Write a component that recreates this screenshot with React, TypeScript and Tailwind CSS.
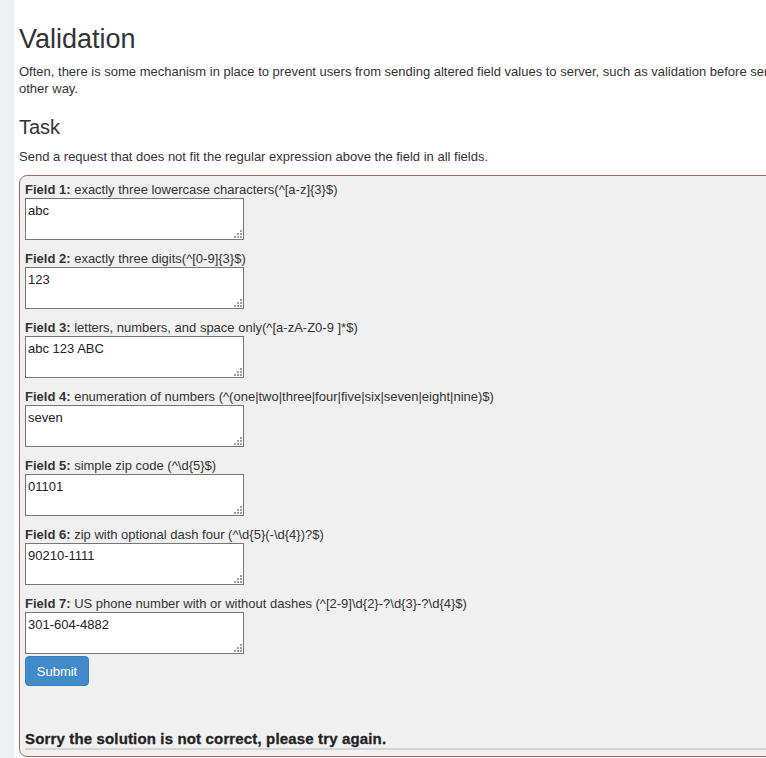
import React from "react";

const fields = [
  { n: 1, desc: "exactly three lowercase characters(^[a-z]{3}$)", value: "abc" },
  { n: 2, desc: "exactly three digits(^[0-9]{3}$)", value: "123" },
  { n: 3, desc: "letters, numbers, and space only(^[a-zA-Z0-9 ]*$)", value: "abc 123 ABC" },
  { n: 4, desc: "enumeration of numbers (^(one|two|three|four|five|six|seven|eight|nine)$)", value: "seven" },
  { n: 5, desc: "simple zip code (^\\d{5}$)", value: "01101" },
  { n: 6, desc: "zip with optional dash four (^\\d{5}(-\\d{4})?$)", value: "90210-1111" },
  { n: 7, desc: "US phone number with or without dashes (^[2-9]\\d{2}-?\\d{3}-?\\d{4}$)", value: "301-604-4882" },
];

function Grip() {
  // windows-style dotted resize handle
  return (
    <svg className="pointer-events-none absolute right-[2px] bottom-[2px]" width="8" height="8" viewBox="0 0 8 8">
      <g fill="#a0a0a0">
        <rect x="6" y="0" width="2" height="2" />
        <rect x="3" y="3" width="2" height="2" />
        <rect x="6" y="3" width="2" height="2" />
        <rect x="0" y="6" width="2" height="2" />
        <rect x="3" y="6" width="2" height="2" />
        <rect x="6" y="6" width="2" height="2" />
      </g>
    </svg>
  );
}

export default function App() {
  return (
    <div className="flex h-[758px] w-[766px] overflow-hidden bg-white text-[#333] font-['Liberation_Sans',Arial,sans-serif] text-[13px] leading-[17px]">
      <div className="w-[14px] shrink-0 bg-[#eef0f4]" />
      <div className="ml-[5px] w-[900px] shrink-0">
        <h1 className="mt-[22px] text-[27px] leading-[34px]">Validation</h1>
        <div className="mt-[7px]">
          <p className="whitespace-nowrap">
            Often, there is some mechanism in place to prevent users from sending altered field values to server, such as validation before sending.
          </p>
          <p>other way.</p>
        </div>
        <h2 className="mt-[16px] text-[20px] leading-[28px]">Task</h2>
        <p className="mt-[7px]">Send a request that does not fit the regular expression above the field in all fields.</p>
        <form
          className="mt-[10px] rounded-[8px] border border-[#a86868] bg-[#f0f0f0] px-[5px] pt-[5px] pb-[6px]"
          onSubmit={(e) => e.preventDefault()}
        >
          <div>
            {fields.map((f) => (
              <div key={f.n} className="mb-[10px] last:mb-0">
                <div>
                  <b>Field {f.n}:</b> {f.desc}
                </div>
                <div className="relative w-[219px]">
                  <textarea
                    defaultValue={f.value}
                    className="block h-[42px] w-[219px] resize-none border border-[#767676] bg-white px-[2px] pt-[3px] pb-[1px] text-[13px] leading-[17px] text-[#222] outline-none"
                  />
                  <Grip />
                </div>
              </div>
            ))}
          </div>
          <button
            type="submit"
            className="mt-[2px] block h-[30px] w-[64px] rounded-[4px] border border-[#3a7fbd] bg-[#428bca] text-[13px] text-white"
          >
            Submit
          </button>
          <div className="mt-[45px] text-[15px] font-bold leading-[16px] tracking-[0.15px] text-[#222] [-webkit-text-stroke:0.3px_#222]">
            Sorry the solution is not correct, please try again.
          </div>
          <hr className="mt-[1px] border-t-2 border-[#d4d4d4]" />
        </form>
      </div>
    </div>
  );
}
